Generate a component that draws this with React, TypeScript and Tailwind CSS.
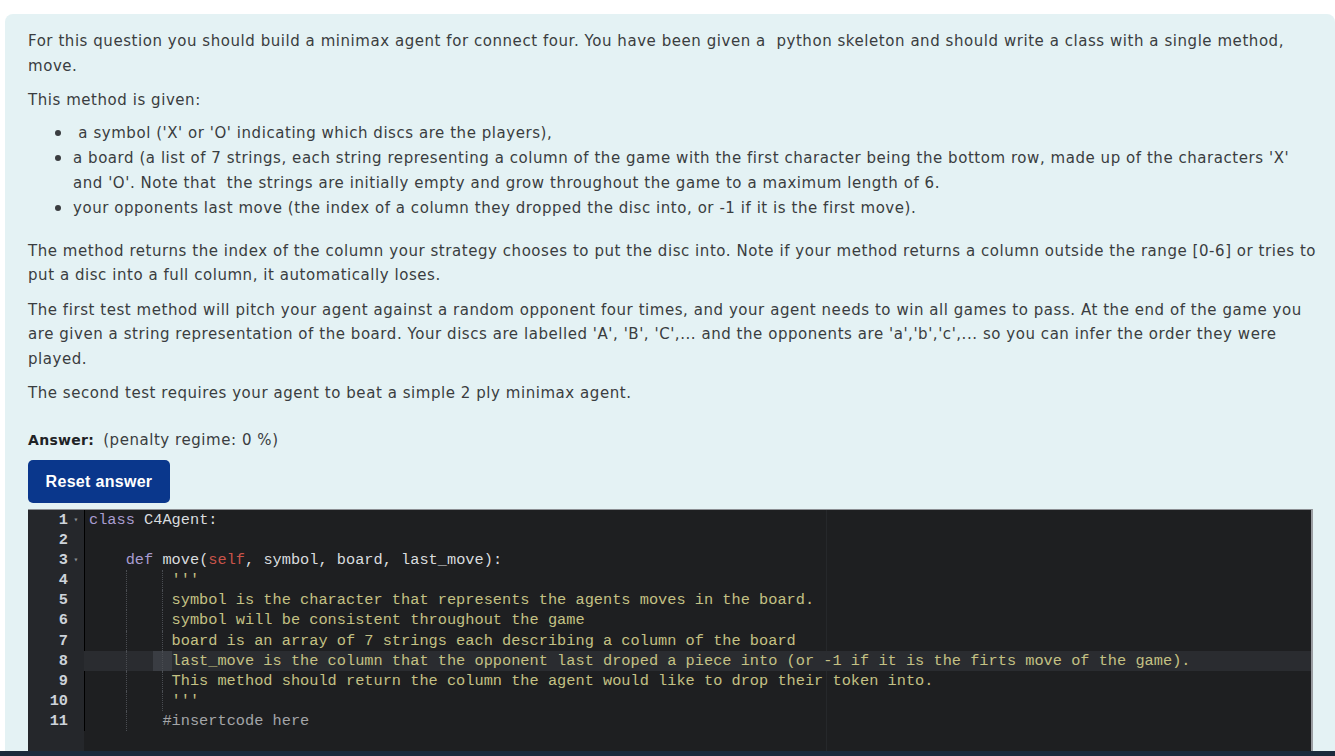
import React from "react";

type Tok = { t: string; c?: string };

const KW = "text-[#a99cd0]";
const PLAIN = "text-[#d9dcdf]";
const SELF = "text-[#c9544a]";
const DOC = "text-[#c4c184]";
const CMT = "text-[#a3a5a8]";

const codeLines: { indent: number; guides: number[]; toks: Tok[]; fold?: boolean; active?: boolean }[] = [
  { indent: 0, guides: [], fold: true, toks: [{ t: "class", c: KW }, { t: " C4Agent:", c: PLAIN }] },
  { indent: 0, guides: [], toks: [] },
  {
    indent: 4,
    guides: [],
    fold: true,
    toks: [
      { t: "def", c: KW },
      { t: " move(", c: PLAIN },
      { t: "self", c: SELF },
      { t: ", symbol, board, last_move):", c: PLAIN },
    ],
  },
  { indent: 9, guides: [4, 8], toks: [{ t: "'''", c: DOC }] },
  { indent: 9, guides: [4, 8], toks: [{ t: "symbol is the character that represents the agents moves in the board.", c: DOC }] },
  { indent: 9, guides: [4, 8], toks: [{ t: "symbol will be consistent throughout the game", c: DOC }] },
  { indent: 9, guides: [4, 8], toks: [{ t: "board is an array of 7 strings each describing a column of the board", c: DOC }] },
  {
    indent: 9,
    guides: [4, 8],
    active: true,
    toks: [{ t: "last_move is the column that the opponent last droped a piece into (or -1 if it is the firts move of the game).", c: DOC }],
  },
  { indent: 9, guides: [4, 8], toks: [{ t: "This method should return the column the agent would like to drop their token into.", c: DOC }] },
  { indent: 9, guides: [4, 8], toks: [{ t: "'''", c: DOC }] },
  { indent: 8, guides: [4], toks: [{ t: "#insertcode here", c: CMT }] },
];

function Indent({ n, guides, active }: { n: number; guides: number[]; active?: boolean }) {
  const cells = [];
  for (let i = 0; i < n; i++) {
    const guide = guides.includes(i);
    const mark = active && (i === 7 || i === 8);
    cells.push(
      <span
        key={i}
        className={
          "inline-block w-[1ch] h-full align-top " +
          (guide ? "border-l border-dotted border-[#4a4d52] " : "") +
          (mark ? "bg-[#3a3d43] " : "")
        }
      >
        {"\u00a0"}
      </span>
    );
  }
  return <>{cells}</>;
}

function Editor() {
  return (
    <div className="relative flex bg-[#1e1f21] border-t border-[#8c8f93] border-r-2 border-r-[#9a9da1] h-full font-['Liberation_Mono',monospace] text-[15.3px] leading-[20.1px]">
      <div className="w-[56px] shrink-0 bg-[#25272b] flex">
        <div className="flex-1 border-r border-black self-start">
          {codeLines.map((l, i) => (
            <div key={i} className="flex h-[20.1px] items-center text-[#cdd3da] font-bold">
              <span className="w-[40px] text-right">{i + 1}</span>
              <span className="w-[16px] text-[8px] text-[#8a8e94] text-center">{l.fold ? "▾" : ""}</span>
            </div>
          ))}
        </div>
      </div>
      <div className="relative flex-1">
        <div className="absolute top-0 bottom-0 left-[calc(8px+80ch)] w-px bg-[#26282b]" />
        {codeLines.map((l, i) => (
          <div
            key={i}
            className={"relative flex h-[20.1px] whitespace-pre pl-[5px] " + (l.active ? "bg-[#2a2c30]" : "")}
          >
            <Indent n={l.indent} guides={l.guides} active={l.active} />
            {l.toks.map((t, j) => (
              <span key={j} className={t.c}>
                {t.t}
              </span>
            ))}
          </div>
        ))}
      </div>
    </div>
  );
}

export default function App() {
  return (
    <div className="h-[756px] w-[1335px] overflow-hidden bg-white flex flex-col">
      <div className="flex-1 overflow-hidden pt-[14px] pl-[5px]">
        <div className="h-full bg-[#e4f2f4] rounded-t-lg pl-[23px] pr-[22px] pt-[15px] flex flex-col">
          <div className="font-['DejaVu_Sans',sans-serif] text-[15px] tracking-[0.55px] leading-[24.5px] text-[#3a3d40] whitespace-nowrap">
            <p>
              For this question you should build a minimax agent for connect four. You have been given a&nbsp; python skeleton and should write a class with a single method,
              <br />
              move.
            </p>
            <p className="mt-[10px]">This method is given:</p>
            <ul className="mt-[7px] list-disc pl-[45px] marker:text-[18px]">
              <li>&nbsp;a symbol ('X' or 'O' indicating which discs are the players),</li>
              <li>
                a board (a list of 7 strings, each string representing a column of the game with the first character being the bottom row, made up of the characters 'X'
                <br />
                and 'O'. Note that&nbsp; the strings are initially empty and grow throughout the game to a maximum length of 6.
              </li>
              <li>your opponents last move (the index of a column they dropped the disc into, or -1 if it is the first move).</li>
            </ul>
            <p className="mt-[18px]">
              The method returns the index of the column your strategy chooses to put the disc into. Note if your method returns a column outside the range [0-6] or tries to
              <br />
              put a disc into a full column, it automatically loses.
            </p>
            <p className="mt-[10px]">
              The first test method will pitch your agent against a random opponent four times, and your agent needs to win all games to pass. At the end of the game you
              <br />
              are given a string representation of the board. Your discs are labelled 'A', 'B', 'C',... and the opponents are 'a','b','c',... so you can infer the order they were
              <br />
              played.
            </p>
            <p className="mt-[10px]">The second test requires your agent to beat a simple 2 ply minimax agent.</p>
            <p className="mt-[22px]">
              <span className="font-bold text-[#1f2326] text-[14px] tracking-[0.3px]">Answer:</span>
              <span className="ml-[9px]">(penalty regime: 0 %)</span>
            </p>
          </div>
          <button className="mt-[8px] w-[142px] h-[43px] rounded-[5px] bg-[#0a378c] text-white font-['Liberation_Sans',sans-serif] font-bold text-[16px] tracking-[0.3px] self-start">
            Reset answer
          </button>
          <div className="mt-[6px] flex-1 w-[1285px]">
            <Editor />
          </div>
        </div>
      </div>
      <div className="h-[5px] bg-[#1b2a3c]" />
    </div>
  );
}
